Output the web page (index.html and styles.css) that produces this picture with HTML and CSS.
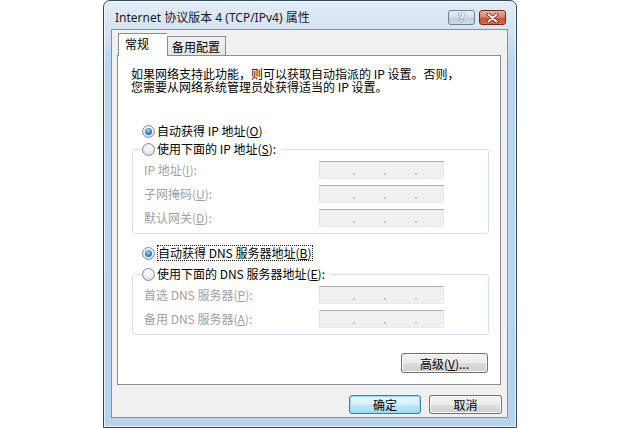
FILE: index.html
```html
<!DOCTYPE html>
<html lang="zh-CN">
<head>
    <meta charset="UTF-8">
    <title>Internet 协议版本 4 (TCP/IPv4) 属性</title>
    <link rel="stylesheet" href="styles.css">
</head>
<body>
    <div class="window">
        <div class="titlebar">
            <span class="title">Internet 协议版本 4 (TCP/IPv4) 属性</span>
            <div class="caption">
                <span class="cap-btn help">?</span>
                <span class="cap-btn close">
                    <svg width="13" height="10" viewBox="0 0 13 10">
                        <path d="M2.5 1.5 L10.5 8.5 M10.5 1.5 L2.5 8.5" stroke="#6e2515" stroke-width="3.6" stroke-linecap="round"/>
                        <path d="M2.5 1.5 L10.5 8.5 M10.5 1.5 L2.5 8.5" stroke="#ffffff" stroke-width="2" stroke-linecap="round"/>
                    </svg>
                </span>
            </div>
        </div>

        <div class="client">
            <div class="tabs">
                <span class="tab active">常规</span>
                <span class="tab">备用配置</span>
            </div>

            <div class="panel">
                <p class="desc">如果网络支持此功能，则可以获取自动指派的 IP 设置。否则，<br>您需要从网络系统管理员处获得适当的 IP 设置。</p>

                <div class="option first"><span class="radio on"></span>自动获得 IP 地址(<u>O</u>)</div>

                <fieldset class="group">
                    <legend><span class="radio"></span>使用下面的 IP 地址(<u>S</u>):</legend>
                    <div class="fields">
                        <span class="field-label">IP 地址(<u>I</u>):</span>
                        <span class="ipbox"><i>.</i><i>.</i><i>.</i></span>
                        <span class="field-label">子网掩码(<u>U</u>):</span>
                        <span class="ipbox"><i>.</i><i>.</i><i>.</i></span>
                        <span class="field-label">默认网关(<u>D</u>):</span>
                        <span class="ipbox"><i>.</i><i>.</i><i>.</i></span>
                    </div>
                </fieldset>

                <div class="option dns"><span class="radio on"></span><span class="focus">自动获得 DNS 服务器地址(<u>B</u>)</span></div>

                <fieldset class="group second">
                    <legend><span class="radio"></span>使用下面的 DNS 服务器地址(<u>E</u>):</legend>
                    <div class="fields">
                        <span class="field-label">首选 DNS 服务器(<u>P</u>):</span>
                        <span class="ipbox"><i>.</i><i>.</i><i>.</i></span>
                        <span class="field-label">备用 DNS 服务器(<u>A</u>):</span>
                        <span class="ipbox"><i>.</i><i>.</i><i>.</i></span>
                    </div>
                </fieldset>

                <div class="adv-row">
                    <button class="btn adv">高级(<u>V</u>)...</button>
                </div>
            </div>

            <div class="dialog-buttons">
                <button class="btn default ok">确定</button>
                <button class="btn cancel">取消</button>
            </div>
        </div>
    </div>
</body>
</html>
```

FILE: styles.css
```css
body {
    margin: 0;
    width: 620px;
    height: 428px;
    overflow: hidden;
    background: #ffffff;
    font-family: "Noto Sans CJK SC", "Noto Sans", sans-serif;
    font-size: 12px;
    color: #000000;
}

/* window frame */
.window {
    box-sizing: border-box;
    width: 414px;
    height: 428px;
    margin-left: 103px;
    padding: 0 8px 9px 7px;
    border: 1px solid #33475c;
    border-radius: 7px 7px 0 0;
    background: linear-gradient(to bottom, #e3ecf6 0, #d6e4f2 28px, #bcd6ef 60px, #b6d3ee 100%);
    box-shadow: inset 0 0 0 1px rgba(255, 255, 255, 0.7);
    display: flex;
    flex-direction: column;
}

.titlebar {
    height: 28px;
    flex: none;
    display: flex;
    justify-content: space-between;
    align-items: flex-start;
}
.title {
    margin: 9px 0 0 4px;
    font-family: "Noto Sans", "Noto Sans CJK SC", sans-serif;
    font-size: 12px;
    line-height: 16px;
    color: #1b1b1b;
}
.caption { display: flex; gap: 4px; margin: 9px 2px 0 0; }
.cap-btn {
    box-sizing: border-box;
    width: 27px;
    height: 15px;
    border-radius: 3px;
    display: flex;
    align-items: center;
    justify-content: center;
}
.help {
    border: 1px solid #6d7f96;
    background: linear-gradient(#e8eff7 0%, #d2dde9 50%, #bccbdd 51%, #cddbeb 100%);
    color: #ffffff;
    font: bold 12px "DejaVu Sans", sans-serif;
    line-height: 12px;
    text-shadow: 0 0 1px #3c4c60, 0 0 1px #3c4c60;
}
.close {
    border: 1px solid #6b2a1c;
    background: linear-gradient(#eab0a0 0%, #d97c63 50%, #c24e2f 51%, #d56c4e 100%);
}

/* client area */
.client {
    flex: 1;
    border: 1px solid #7f91a6;
    background: #f0f0f0;
    padding: 3px 6px 0 5px;
    display: flex;
    flex-direction: column;
}

.tabs {
    height: 22px;
    display: flex;
    align-items: flex-end;
    padding-left: 1px;
    position: relative;
    z-index: 1;
}
.tab {
    box-sizing: border-box;
    width: 59px;
    height: 19px;
    padding: 2px 0 0 4px;
    line-height: 16px;
    border: 1px solid #898c95;
    border-bottom: 0;
    background: linear-gradient(#f4f4f4, #e2e2e2);
}
.tab.active {
    width: 49px;
    height: 23px;
    margin-bottom: -1px;
    padding: 2px 0 0 6px;
    border-right: 0;
    background: #ffffff;
}

.panel {
    box-sizing: border-box;
    height: 330px;
    border: 1px solid #898c95;
    background: #ffffff;
}

.desc {
    margin: 11px 0 0 13px;
    line-height: 13px;
}

.option {
    height: 16px;
    line-height: 16px;
    padding-left: 24px;
    display: flex;
    align-items: center;
}
.option.first { margin-top: 30px; }
.option.dns { margin-top: 11px; }
.focus { border: 1px dotted #222222; line-height: 14px; padding-right: 1px; }

.radio {
    box-sizing: border-box;
    width: 13px;
    height: 13px;
    margin-right: 2px;
    border-radius: 50%;
    border: 1px solid #8c8c8c;
    background: radial-gradient(circle at 50% 35%, #ffffff 0%, #f0f0f0 45%, #cfcfcf 100%);
    display: inline-flex;
    align-items: center;
    justify-content: center;
    flex: none;
}
.radio.on::after {
    content: "";
    width: 7px;
    height: 7px;
    border-radius: 50%;
    background: radial-gradient(circle at 45% 35%, #a6dbff 0%, #3b8ee0 45%, #0f4f9c 100%);
}

/* group boxes */
.group {
    margin: 2px 11px 0 14px;
    padding: 4px 0 6px 9px;
    border: 1px solid #d5dfe5;
    border-radius: 3px;
    min-width: 0;
}
.group.second { margin-top: 5px; }
.group legend {
    padding: 0 6px 0 0;
    height: 16px;
    line-height: 16px;
    display: flex;
    align-items: center;
}

.fields {
    padding-left: 2px;
    display: grid;
    grid-template-columns: 175px 125px;
    grid-auto-rows: 18px;
    row-gap: 6px;
    align-items: center;
}
.field-label { color: #a0a0a0; line-height: 18px; }
.ipbox {
    box-sizing: border-box;
    height: 18px;
    padding-left: 32px;
    display: flex;
    gap: 27px;
    border: 1px solid;
    border-color: #abadb3 #e3e9ef #e3e9ef #e2e3ea;
    background: #f0f0f0;
}
.ipbox i {
    width: 4px;
    font-style: normal;
    text-align: center;
    color: #a6a6a6;
    line-height: 16px;
}

/* buttons */
.btn {
    box-sizing: border-box;
    height: 19px;
    padding: 0;
    border: 1px solid #707070;
    border-radius: 3px;
    background: linear-gradient(#f2f2f2 0%, #ebebeb 50%, #dddddd 51%, #cfcfcf 100%);
    box-shadow: inset 0 0 0 1px #fbfbfb;
    font-family: "Noto Sans CJK SC", "Noto Sans", sans-serif;
    font-size: 12px;
    line-height: 15px;
    color: #000000;
}
.adv-row {
    margin-top: 18px;
    padding-right: 12px;
    display: flex;
    justify-content: flex-end;
}
.btn.adv { width: 87px; height: 20px; }

.dialog-buttons {
    margin-top: 10px;
    margin-right: -1px;
    display: flex;
    justify-content: flex-end;
    gap: 8px;
}
.ok { width: 72px; }
.cancel { width: 73px; }
.btn.default {
    border-color: #3c7fb1;
    background: linear-gradient(#eaf6fd 0%, #d9f0fc 50%, #bee6fd 51%, #a7d9f5 100%);
    box-shadow: inset 0 0 0 1px #8fdcfa;
}
```
